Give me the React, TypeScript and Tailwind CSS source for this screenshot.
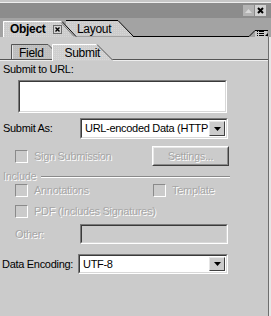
import React from "react";

const PANEL = "#cbcbcb";

function Checkbox() {
  return (
    <div className="w-[13px] h-[13px] shrink-0 border border-t-[#8a8a8a] border-l-[#8a8a8a] border-b-white border-r-white bg-[#cbcbcb]" />
  );
}

function Disabled({ children }: { children: React.ReactNode }) {
  return (
    <span className="text-[#a6a6a6] [text-shadow:1px_1px_0_#ffffff] whitespace-nowrap">{children}</span>
  );
}

function Inset({ className, children }: { className: string; children?: React.ReactNode }) {
  return (
    <div className={"border border-t-[#7a7a7a] border-l-[#7a7a7a] border-b-white border-r-white " + className}>
      <div className="w-full h-full border border-t-[#3a3a3a] border-l-[#3a3a3a] border-b-[#d8d8d8] border-r-[#d8d8d8] flex items-center overflow-hidden">
        {children}
      </div>
    </div>
  );
}

function DropButton() {
  return (
    <div className="w-[16px] h-full shrink-0 border border-t-[#e6e6e6] border-l-[#e6e6e6] border-b-[#404040] border-r-[#404040] bg-[#cbcbcb] flex items-center justify-center">
      <svg width="7" height="4" viewBox="0 0 7 4">
        <path d="M0 0H7L3.5 4Z" fill="#000" />
      </svg>
    </div>
  );
}

function Select({ value, className }: { value: string; className: string }) {
  return (
    <Inset className={className + " bg-white"}>
      <div className="flex-1 pl-[3px] text-black whitespace-nowrap overflow-hidden">{value}</div>
      <div className="h-full py-[1px] pr-[1px]">
        <DropButton />
      </div>
    </Inset>
  );
}

function MainTabs() {
  return (
    <div className="relative h-[19px] bg-[#a3a3a3] shrink-0">
      <svg className="absolute inset-0" width="271" height="19" viewBox="0 0 271 19">
        <defs>
          <pattern id="dith" width="2" height="2" patternUnits="userSpaceOnUse">
            <rect width="2" height="2" fill="#cbcbcb" />
            <rect width="1" height="1" fill="#d6d6d6" />
          </pattern>
        </defs>
        {/* Layout tab */}
        <path d="M66 19 L66 2 L118 2 L133 18 L66 18Z" fill="url(#dith)" />
        <path d="M66 2.5 H118 L133.5 18.5" stroke="#000" fill="none" />
        {/* baseline */}
        <path d="M133 18.5 H249 L255 12.5 H268" stroke="#000" fill="none" />
        <rect x="255" y="13" width="12" height="6" fill="#cbcbcb" />
        {/* Object tab */}
        <path d="M3 19 L3 3 L62 3 L76 19Z" fill="url(#dith)" />
        <path d="M3.5 19 V3.5 H62" stroke="#ffffff" fill="none" />
        <path d="M62 3.5 L76 18.5" stroke="#000" fill="none" />
        <path d="M61 4.5 L74 18.5" stroke="#7a7a7a" fill="none" />
        {/* small close box on Object tab */}
        <rect x="53.5" y="7.5" width="8" height="8" fill="#d4d4d4" stroke="#6a6a6a" />
        <path d="M55.5 9.5 L59.5 13.5 M59.5 9.5 L55.5 13.5" stroke="#000" strokeWidth="1.4" />
        {/* menu icon */}
        <rect x="257" y="13" width="1" height="1" fill="#000" />
        <rect x="257" y="15" width="1" height="1" fill="#000" />
        <rect x="257" y="17" width="1" height="1" fill="#000" />
        <rect x="259" y="13" width="5" height="1" fill="#000" />
        <rect x="259" y="15" width="5" height="1" fill="#000" />
        <rect x="259" y="17" width="5" height="1" fill="#000" />
        <path d="M268 15 V18 H265Z" fill="#000" />
      </svg>
      <div className="relative flex items-center h-full pt-[3px]">
        <span className="ml-[10px] w-[37px] text-[12px] font-bold text-black leading-none">Object</span>
        <span className="ml-[30px] text-[12px] tracking-[-0.3px] text-black leading-none">Layout</span>
      </div>
    </div>
  );
}

function SubTabs() {
  return (
    <div className="relative h-[18px] mt-[6px] shrink-0">
      <svg className="absolute inset-0" width="268" height="18" viewBox="0 0 268 18">
        <defs>
          <pattern id="dith2" width="2" height="2" patternUnits="userSpaceOnUse">
            <rect width="2" height="2" fill="#cfcfcf" />
            <rect width="1" height="1" fill="#d9d9d9" />
          </pattern>
          <pattern id="dith3" width="2" height="2" patternUnits="userSpaceOnUse">
            <rect width="2" height="2" fill="#bdbdbd" />
            <rect width="1" height="1" fill="#c6c6c6" />
          </pattern>
        </defs>
        {/* Field tab */}
        <path d="M11 17 V1 H48 L56 9 V17Z" fill="url(#dith3)" />
        <path d="M11.5 17 V1.5 H48 L55 8.5" stroke="#555" fill="none" />
        <path d="M12.5 17 V2.5" stroke="#e8e8e8" fill="none" />
        {/* baseline */}
        <path d="M0 16.5 H52 M112 16.5 H268" stroke="#555" fill="none" />
        <path d="M0 17.5 H52 M113 17.5 H268" stroke="#eeeeee" fill="none" />
        {/* Submit tab */}
        <path d="M52 18 V1 H97 L113 17 V18Z" fill="url(#dith2)" />
        <path d="M52.5 18 V1.5 H97" stroke="#ffffff" fill="none" />
        <path d="M97 1.5 L112.5 17" stroke="#555" fill="none" />
      </svg>
      <div className="relative flex items-center h-full pt-[2px] text-[12px] tracking-[-0.3px] leading-none text-black">
        <span className="ml-[19px]">Field</span>
        <span className="ml-[21px]">Submit</span>
      </div>
    </div>
  );
}

export default function App() {
  return (
    <div
      className="w-[271px] h-[316px] flex flex-col overflow-hidden text-[11px] leading-[13px] tracking-[-0.3px] text-black"
      style={{ fontFamily: '"Liberation Sans", Arial, sans-serif', background: PANEL }}
    >
      {/* top border */}
      <div className="h-[2px] bg-[#c6c6c6] shrink-0" />
      <div className="h-[1px] bg-[#eeeeee] shrink-0" />
      {/* title bar */}
      <div className="h-[15px] bg-[#8c8c8c] flex items-start justify-end pt-[2px] pr-[5px] gap-[1px] shrink-0">
        <div className="w-[11px] h-[11px] bg-[#b4b4b4] flex items-center justify-center">
          <svg width="7" height="4" viewBox="0 0 7 4">
            <path d="M3.5 0L7 4H0Z" fill="#d8d8d8" />
          </svg>
        </div>
        <div className="w-[11px] h-[11px] bg-[#d2d2d2] flex items-center justify-center">
          <svg width="7" height="7" viewBox="0 0 7 7">
            <path d="M1 1L6 6M6 1L1 6" stroke="#000" strokeWidth="2" />
          </svg>
        </div>
      </div>
      <MainTabs />
      {/* body */}
      <div className="flex-1 flex">
        <div className="flex-1 flex flex-col">
          <SubTabs />
          <div className="mt-[2px] ml-[3px] h-[13px] whitespace-nowrap">Submit to URL:</div>
          <Inset className="mt-[4px] ml-[18px] w-[209px] h-[33px] bg-white" />
          <div className="mt-[5px] flex items-center h-[21px]">
            <span className="ml-[3px] w-[77px]">Submit As:</span>
            <Select value="URL-encoded Data (HTTP" className="w-[148px] h-[21px]" />
          </div>
          <div className="mt-[7px] flex items-center h-[20px]">
            <div className="ml-[15px]"><Checkbox /></div>
            <span className="ml-[6px] w-[118px]"><Disabled>Sign Submission</Disabled></span>
            <div className="w-[77px] h-[20px] border border-t-white border-l-white border-b-[#404040] border-r-[#404040]">
              <div className="w-full h-full border border-t-[#e8e8e8] border-l-[#e8e8e8] border-b-[#8a8a8a] border-r-[#8a8a8a] flex items-center justify-center">
                <Disabled>Settings...</Disabled>
              </div>
            </div>
          </div>
          <div className="mt-[4px] flex items-center h-[13px]">
            <span className="ml-[3px]"><Disabled>Include</Disabled></span>
            <div className="ml-[5px] flex-1 mr-[38px] flex flex-col">
              <div className="h-[1px] bg-[#8a8a8a]" />
              <div className="h-[1px] bg-white" />
            </div>
          </div>
          <div className="mt-[1px] flex items-center h-[13px]">
            <div className="ml-[15px]"><Checkbox /></div>
            <span className="ml-[6px] w-[119px]"><Disabled>Annotations</Disabled></span>
            <Checkbox />
            <span className="ml-[6px]"><Disabled>Template</Disabled></span>
          </div>
          <div className="mt-[8px] flex items-center h-[13px]">
            <div className="ml-[15px]"><Checkbox /></div>
            <span className="ml-[6px]"><Disabled>PDF (Includes Signatures)</Disabled></span>
          </div>
          <div className="mt-[6px] flex items-center h-[20px]">
            <span className="ml-[15px] w-[65px]"><Disabled>Other:</Disabled></span>
            <Inset className="w-[148px] h-[20px] bg-[#cbcbcb]" />
          </div>
          <div className="mt-[10px] flex items-center h-[20px]">
            <span className="ml-[2px] w-[76px] whitespace-nowrap">Data Encoding:</span>
            <Select value="UTF-8" className="w-[150px] h-[20px]" />
          </div>
        </div>
        {/* right edge */}
        <div className="w-[1px] bg-[#6e6e6e]" />
        <div className="w-[2px] bg-[#e6e6e6]" />
      </div>
    </div>
  );
}
